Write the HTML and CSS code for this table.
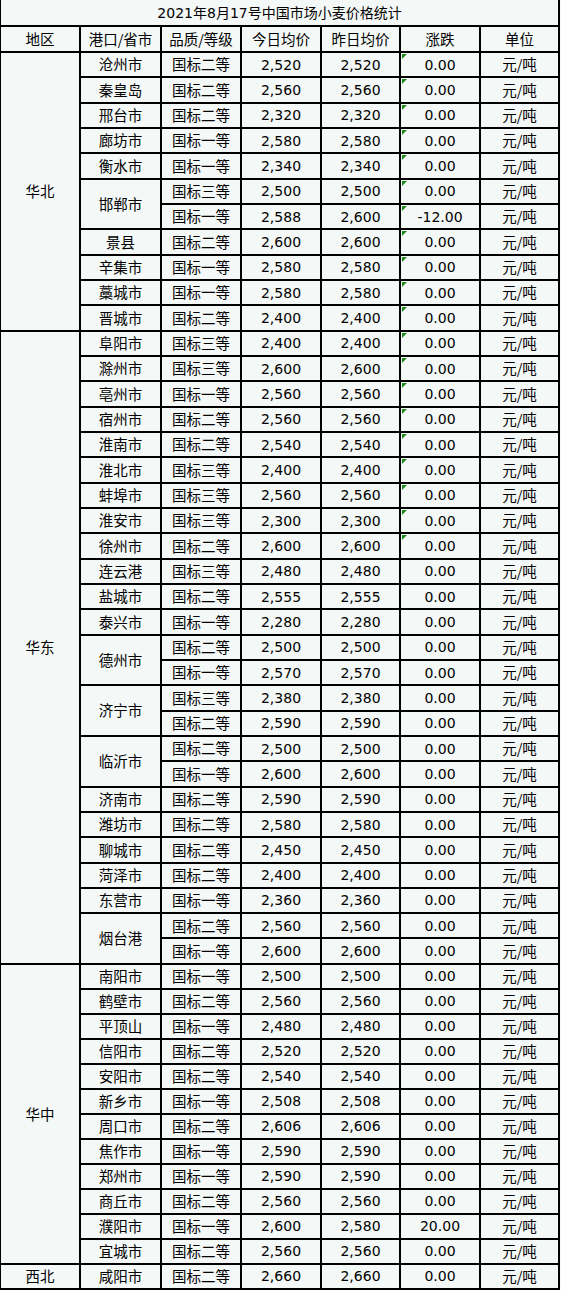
FILE: index.html
```html
<!DOCTYPE html>
<html lang="zh-CN">
<head>
<meta charset="utf-8">
<title>2021年8月17号中国市场小麦价格统计</title>
<link rel="stylesheet" href="styles.css">
</head>
<body>
<table class="price-table">
  <colgroup>
    <col class="c1"><col class="c2"><col class="c3"><col class="c4"><col class="c5"><col class="c6"><col class="c7">
  </colgroup>
  <tr class="title-row"><td colspan="7" class="title">2021年8月17号中国市场小麦价格统计</td></tr>
  <tr class="head-row"><td>地区</td><td>港口/省市</td><td>品质/等级</td><td>今日均价</td><td>昨日均价</td><td>涨跌</td><td>单位</td></tr>

  <tr class="r"><td rowspan="11" class="region">华北</td><td>沧州市</td><td>国标二等</td><td class="n">2,520</td><td class="n">2,520</td><td class="n mark">0.00</td><td>元/吨</td></tr>
  <tr class="r"><td>秦皇岛</td><td>国标二等</td><td class="n">2,560</td><td class="n">2,560</td><td class="n mark">0.00</td><td>元/吨</td></tr>
  <tr class="r"><td>邢台市</td><td>国标二等</td><td class="n">2,320</td><td class="n">2,320</td><td class="n mark">0.00</td><td>元/吨</td></tr>
  <tr class="r"><td>廊坊市</td><td>国标一等</td><td class="n">2,580</td><td class="n">2,580</td><td class="n mark">0.00</td><td>元/吨</td></tr>
  <tr class="r"><td>衡水市</td><td>国标一等</td><td class="n">2,340</td><td class="n">2,340</td><td class="n mark">0.00</td><td>元/吨</td></tr>
  <tr class="r"><td rowspan="2">邯郸市</td><td>国标三等</td><td class="n">2,500</td><td class="n">2,500</td><td class="n mark">0.00</td><td>元/吨</td></tr>
  <tr class="r"><td>国标一等</td><td class="n">2,588</td><td class="n">2,600</td><td class="n mark">-12.00</td><td>元/吨</td></tr>
  <tr class="r"><td>景县</td><td>国标二等</td><td class="n">2,600</td><td class="n">2,600</td><td class="n mark">0.00</td><td>元/吨</td></tr>
  <tr class="r"><td>辛集市</td><td>国标一等</td><td class="n">2,580</td><td class="n">2,580</td><td class="n mark">0.00</td><td>元/吨</td></tr>
  <tr class="r"><td>藁城市</td><td>国标一等</td><td class="n">2,580</td><td class="n">2,580</td><td class="n mark">0.00</td><td>元/吨</td></tr>
  <tr class="r"><td>晋城市</td><td>国标二等</td><td class="n">2,400</td><td class="n">2,400</td><td class="n mark">0.00</td><td>元/吨</td></tr>

  <tr class="r"><td rowspan="25" class="region">华东</td><td>阜阳市</td><td>国标三等</td><td class="n">2,400</td><td class="n">2,400</td><td class="n mark">0.00</td><td>元/吨</td></tr>
  <tr class="r"><td>滁州市</td><td>国标三等</td><td class="n">2,600</td><td class="n">2,600</td><td class="n mark">0.00</td><td>元/吨</td></tr>
  <tr class="r"><td>亳州市</td><td>国标一等</td><td class="n">2,560</td><td class="n">2,560</td><td class="n mark">0.00</td><td>元/吨</td></tr>
  <tr class="r"><td>宿州市</td><td>国标二等</td><td class="n">2,560</td><td class="n">2,560</td><td class="n mark">0.00</td><td>元/吨</td></tr>
  <tr class="r"><td>淮南市</td><td>国标二等</td><td class="n">2,540</td><td class="n">2,540</td><td class="n mark">0.00</td><td>元/吨</td></tr>
  <tr class="r"><td>淮北市</td><td>国标三等</td><td class="n">2,400</td><td class="n">2,400</td><td class="n mark">0.00</td><td>元/吨</td></tr>
  <tr class="r"><td>蚌埠市</td><td>国标三等</td><td class="n">2,560</td><td class="n">2,560</td><td class="n mark">0.00</td><td>元/吨</td></tr>
  <tr class="r"><td>淮安市</td><td>国标三等</td><td class="n">2,300</td><td class="n">2,300</td><td class="n mark">0.00</td><td>元/吨</td></tr>
  <tr class="r"><td>徐州市</td><td>国标二等</td><td class="n">2,600</td><td class="n">2,600</td><td class="n mark">0.00</td><td>元/吨</td></tr>
  <tr class="r"><td>连云港</td><td>国标三等</td><td class="n">2,480</td><td class="n">2,480</td><td class="n">0.00</td><td>元/吨</td></tr>
  <tr class="r"><td>盐城市</td><td>国标二等</td><td class="n">2,555</td><td class="n">2,555</td><td class="n">0.00</td><td>元/吨</td></tr>
  <tr class="r"><td>泰兴市</td><td>国标一等</td><td class="n">2,280</td><td class="n">2,280</td><td class="n">0.00</td><td>元/吨</td></tr>
  <tr class="r"><td rowspan="2">德州市</td><td>国标二等</td><td class="n">2,500</td><td class="n">2,500</td><td class="n">0.00</td><td>元/吨</td></tr>
  <tr class="r"><td>国标一等</td><td class="n">2,570</td><td class="n">2,570</td><td class="n">0.00</td><td>元/吨</td></tr>
  <tr class="r"><td rowspan="2">济宁市</td><td>国标三等</td><td class="n">2,380</td><td class="n">2,380</td><td class="n">0.00</td><td>元/吨</td></tr>
  <tr class="r"><td>国标二等</td><td class="n">2,590</td><td class="n">2,590</td><td class="n">0.00</td><td>元/吨</td></tr>
  <tr class="r"><td rowspan="2">临沂市</td><td>国标二等</td><td class="n">2,500</td><td class="n">2,500</td><td class="n">0.00</td><td>元/吨</td></tr>
  <tr class="r"><td>国标一等</td><td class="n">2,600</td><td class="n">2,600</td><td class="n">0.00</td><td>元/吨</td></tr>
  <tr class="r"><td>济南市</td><td>国标二等</td><td class="n">2,590</td><td class="n">2,590</td><td class="n">0.00</td><td>元/吨</td></tr>
  <tr class="r"><td>潍坊市</td><td>国标二等</td><td class="n">2,580</td><td class="n">2,580</td><td class="n">0.00</td><td>元/吨</td></tr>
  <tr class="r"><td>聊城市</td><td>国标二等</td><td class="n">2,450</td><td class="n">2,450</td><td class="n">0.00</td><td>元/吨</td></tr>
  <tr class="r"><td>菏泽市</td><td>国标二等</td><td class="n">2,400</td><td class="n">2,400</td><td class="n">0.00</td><td>元/吨</td></tr>
  <tr class="r"><td>东营市</td><td>国标一等</td><td class="n">2,360</td><td class="n">2,360</td><td class="n">0.00</td><td>元/吨</td></tr>
  <tr class="r"><td rowspan="2">烟台港</td><td>国标二等</td><td class="n">2,560</td><td class="n">2,560</td><td class="n">0.00</td><td>元/吨</td></tr>
  <tr class="r"><td>国标一等</td><td class="n">2,600</td><td class="n">2,600</td><td class="n">0.00</td><td>元/吨</td></tr>

  <tr class="s"><td rowspan="12" class="region">华中</td><td>南阳市</td><td>国标一等</td><td class="n">2,500</td><td class="n">2,500</td><td class="n">0.00</td><td>元/吨</td></tr>
  <tr class="s"><td>鹤壁市</td><td>国标二等</td><td class="n">2,560</td><td class="n">2,560</td><td class="n">0.00</td><td>元/吨</td></tr>
  <tr class="s"><td>平顶山</td><td>国标一等</td><td class="n">2,480</td><td class="n">2,480</td><td class="n">0.00</td><td>元/吨</td></tr>
  <tr class="s"><td>信阳市</td><td>国标二等</td><td class="n">2,520</td><td class="n">2,520</td><td class="n">0.00</td><td>元/吨</td></tr>
  <tr class="s"><td>安阳市</td><td>国标二等</td><td class="n">2,540</td><td class="n">2,540</td><td class="n">0.00</td><td>元/吨</td></tr>
  <tr class="s"><td>新乡市</td><td>国标一等</td><td class="n">2,508</td><td class="n">2,508</td><td class="n">0.00</td><td>元/吨</td></tr>
  <tr class="s"><td>周口市</td><td>国标二等</td><td class="n">2,606</td><td class="n">2,606</td><td class="n">0.00</td><td>元/吨</td></tr>
  <tr class="s"><td>焦作市</td><td>国标一等</td><td class="n">2,590</td><td class="n">2,590</td><td class="n">0.00</td><td>元/吨</td></tr>
  <tr class="s"><td>郑州市</td><td>国标一等</td><td class="n">2,590</td><td class="n">2,590</td><td class="n">0.00</td><td>元/吨</td></tr>
  <tr class="s"><td>商丘市</td><td>国标二等</td><td class="n">2,560</td><td class="n">2,560</td><td class="n">0.00</td><td>元/吨</td></tr>
  <tr class="s"><td>濮阳市</td><td>国标一等</td><td class="n">2,600</td><td class="n">2,580</td><td class="n">20.00</td><td>元/吨</td></tr>
  <tr class="s"><td>宜城市</td><td>国标二等</td><td class="n">2,560</td><td class="n">2,560</td><td class="n">0.00</td><td>元/吨</td></tr>

  <tr class="s"><td class="region">西北</td><td>咸阳市</td><td>国标二等</td><td class="n">2,660</td><td class="n">2,660</td><td class="n">0.00</td><td>元/吨</td></tr>
</table>
</body>
</html>
```

FILE: styles.css
```css
html, body {
  margin: 0;
  padding: 0;
  background: #f4f8f7;
}

body {
  overflow: hidden;
  height: 1290px;
}

.price-table {
  border-collapse: collapse;
  table-layout: fixed;
  width: 561px;
  margin: -2px 0 0 -1px;
  font-family: "DejaVu Sans", "Noto Sans CJK SC", sans-serif;
  font-size: 14px;
  color: #000;
}

.c1 { width: 80px; }
.c2 { width: 81px; }
.c3 { width: 80px; }
.c4 { width: 80px; }
.c5 { width: 79px; }
.c6 { width: 80px; }
.c7 { width: 79px; }

.price-table td {
  border: 2px solid #000;
  padding: 0;
  text-align: center;
  vertical-align: middle;
  white-space: nowrap;
  font-family: "Noto Sans CJK SC", "DejaVu Sans", sans-serif;
  font-size: 14.5px;
  line-height: 1;
  position: relative;
}

.price-table td.n {
  font-family: "DejaVu Sans", sans-serif;
  font-size: 14px;
}

.title-row { height: 27px; }
.head-row { height: 26px; }
.r { height: 25.33px; }
.s { height: 25px; }

.price-table td.title {
  border-top-color: transparent;
  font-family: "DejaVu Sans", "Noto Sans CJK SC", sans-serif;
  font-size: 14px;
}

.price-table td.mark::before {
  content: "";
  position: absolute;
  left: 1px;
  top: 1px;
  width: 0;
  height: 0;
  border-top: 5px solid #1a8a1a;
  border-right: 5px solid transparent;
}
```
